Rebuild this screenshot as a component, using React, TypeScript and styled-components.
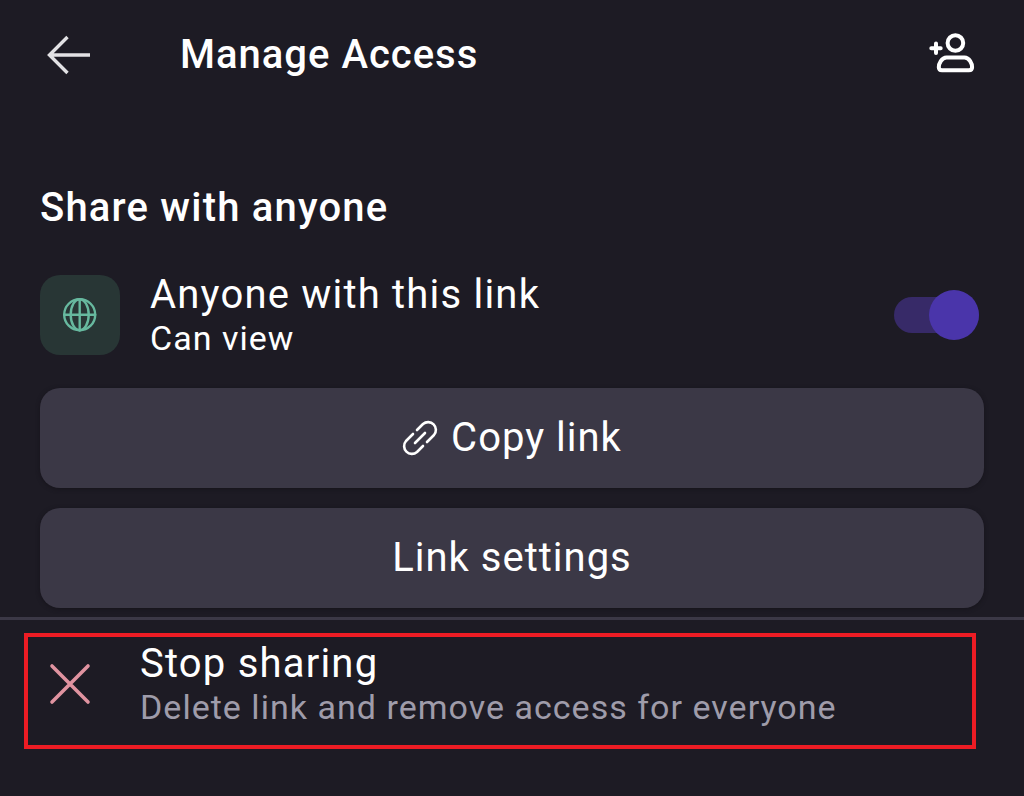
import React from "react";
import styled, { createGlobalStyle } from "styled-components";

const GlobalStyle = createGlobalStyle`
  *, *::before, *::after { box-sizing: border-box; }
  body { margin: 0; background: #1d1b24; color: #fff; font-family: Roboto, sans-serif; letter-spacing: 1px; }
  h1, h2, p { margin: 0; }
  button { font-family: inherit; color: inherit; letter-spacing: inherit; border: 0; padding: 0; background: none; cursor: pointer; }
`;

const Page = styled.div`
  min-height: 100vh;
`;

const Header = styled.header`
  display: flex;
  align-items: center;
  height: 110px;
  padding: 0 48px 0 40px;
`;

const IconButton = styled.button`
  display: flex;
  flex: none;
`;

const Title = styled.h1`
  flex: 1;
  margin-left: 84px;
  font-size: 40px;
  line-height: 48px;
  font-weight: 500;
`;

const Section = styled.section`
  padding: 74px 40px 9px;
`;

const Heading = styled.h2`
  font-size: 40px;
  line-height: 48px;
  font-weight: 500;
  letter-spacing: 0.03em;
`;

const LinkRow = styled.div`
  display: flex;
  align-items: center;
  height: 80px;
  margin: 43px 0 33px;
`;

const Badge = styled.div`
  display: grid;
  place-items: center;
  width: 80px;
  height: 80px;
  border-radius: 20px;
  background: #283635;
`;

const LinkLabel = styled.label`
  flex: 1;
  margin-left: 30px;
`;

const Primary = styled.span`
  display: block;
  font-size: 40px;
  line-height: 46px;
  letter-spacing: 0.03em;
`;

const Secondary = styled.span<{ $muted?: boolean }>`
  display: block;
  font-size: 34px;
  line-height: 40px;
  letter-spacing: 0.03em;
  color: ${(p) => (p.$muted ? "#9f9caa" : "#fff")};
`;

const Switch = styled.input`
  appearance: none;
  display: flex;
  align-items: center;
  justify-content: flex-start;
  width: 85px;
  height: 36px;
  margin: 0 5px 0 0;
  border-radius: 18px;
  background: #372a68;
  cursor: pointer;
  &:checked { justify-content: flex-end; }
  &::before {
    content: "";
    flex: none;
    width: 50px;
    height: 50px;
    border-radius: 50%;
    background: #4a35aa;
  }
`;

const Actions = styled.div`
  display: grid;
  gap: 20px;
`;

const ActionButton = styled.button`
  display: flex;
  align-items: center;
  justify-content: center;
  gap: 13px;
  height: 100px;
  border-radius: 20px;
  background: #3b3846;
  box-shadow: 0 1px 4px #16141b;
  font-size: 40px;
  line-height: 48px;
`;

const Footer = styled.footer`
  padding: 13px 48px 13px 24px;
  border-top: 3px solid #3b3846;
`;

const StopButton = styled.button`
  display: flex;
  align-items: center;
  width: 100%;
  height: 116px;
  padding: 0 20px 14px;
  border: 4px solid #ed1c24;
  text-align: left;
`;

const StopTexts = styled.span`
  flex: 1;
  margin-left: 48px;
`;

const stroke = { fill: "none", strokeLinecap: "round", strokeLinejoin: "round" } as const;

const BackIcon = () => (
  <svg width="56" height="48" viewBox="0 0 56 48" fill="none" stroke="#e2e1e4" strokeWidth="3.4">
    <path d="M50 24H10M27.5 6L9.5 24l18 18" />
  </svg>
);

const AddPersonIcon = () => (
  <svg width="48" height="44" viewBox="0 0 48 44" {...stroke} stroke="#fff" strokeWidth="4">
    <circle cx="27.4" cy="10" r="7.8" />
    <path d="M18.5 24.6h18c5 0 7.6 6.4 7.6 9.6q0 3.1-3.2 3.1H14q-3.2 0-3.2-3.1c0-3.2 2.7-9.6 7.7-9.6z" />
    <path d="M3.3 15.3h9.4M8 10.6v9.4" />
  </svg>
);

const GlobeIcon = () => (
  <svg width="36" height="36" viewBox="0 0 36 36" {...stroke} stroke="#67b99f" strokeWidth="2.4">
    <circle cx="17.7" cy="17.7" r="15.5" />
    <ellipse cx="17.7" cy="17.7" rx="9" ry="15.5" />
    <path d="M2.2 17.7h31M17.7 2.2v31" />
  </svg>
);

const LinkIcon = () => (
  <svg width="36" height="36" viewBox="0 0 36 36" {...stroke} stroke="#fff" strokeWidth="2.6">
    <path d="M15 10l6-6A7.8 7.8 0 0 1 32 15l-7 7M11 14l-7 7A7.8 7.8 0 0 0 15 32l6-6M13 23L23 13" />
  </svg>
);

const CloseIcon = () => (
  <svg width="44" height="44" viewBox="0 0 44 44" {...stroke} stroke="#e093a0" strokeWidth="3.6">
    <path d="M4 4l36 36M40 4L4 40" />
  </svg>
);

export default function App() {
  return (
    <Page>
      <GlobalStyle />
      <Header>
        <IconButton aria-label="Back"><BackIcon /></IconButton>
        <Title>Manage Access</Title>
        <IconButton aria-label="Add people"><AddPersonIcon /></IconButton>
      </Header>
      <main>
        <Section>
          <Heading>Share with anyone</Heading>
          <LinkRow>
            <Badge><GlobeIcon /></Badge>
            <LinkLabel htmlFor="link-access">
              <Primary>Anyone with this link</Primary>
              <Secondary>Can view</Secondary>
            </LinkLabel>
            <Switch id="link-access" type="checkbox" role="switch" defaultChecked />
          </LinkRow>
          <Actions>
            <ActionButton><LinkIcon />Copy link</ActionButton>
            <ActionButton>Link settings</ActionButton>
          </Actions>
        </Section>
      </main>
      <Footer>
        <StopButton>
          <CloseIcon />
          <StopTexts>
            <Primary>Stop sharing</Primary>
            <Secondary $muted>Delete link and remove access for everyone</Secondary>
          </StopTexts>
        </StopButton>
      </Footer>
    </Page>
  );
}
